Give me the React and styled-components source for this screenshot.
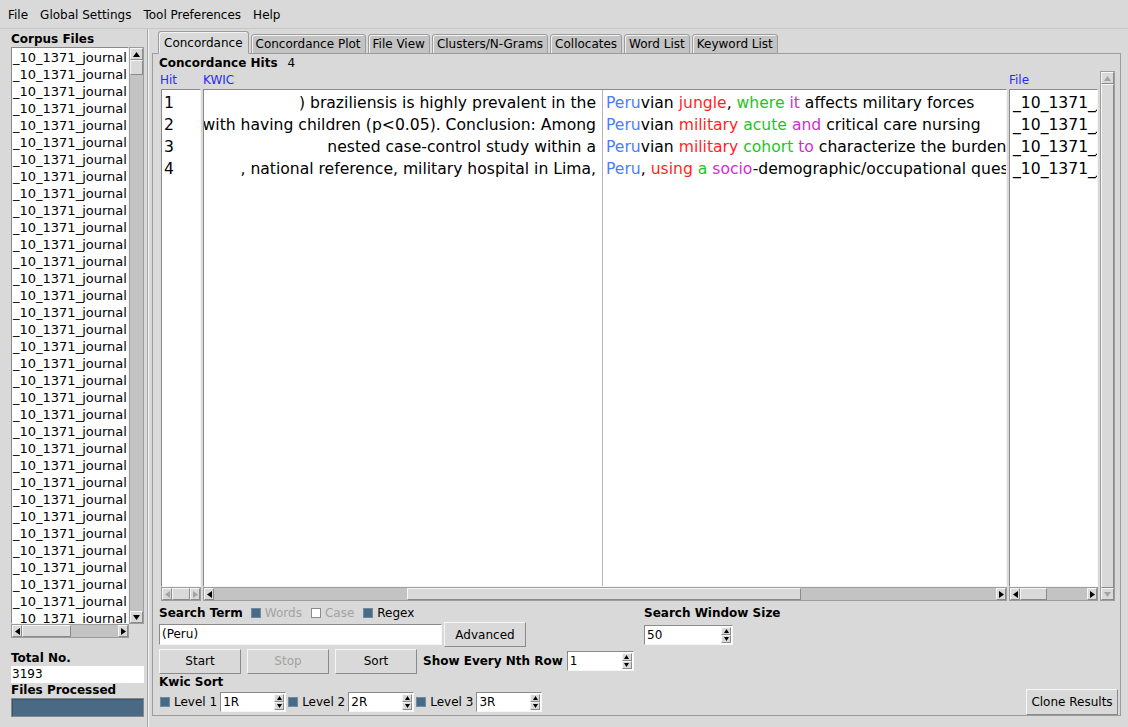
import React from "react";
import styled, { createGlobalStyle, css } from "styled-components";

const GlobalStyle = createGlobalStyle`
  html, body {
    margin: 0;
    padding: 0;
    background: #d9d9d9;
  }
  body {
    font-family: "DejaVu Sans", sans-serif;
    font-size: 12px;
    color: #000;
  }
  * { box-sizing: border-box; }
`;

// Tk-ish bevels
const raised = css`
  border: 1px solid;
  border-color: #f6f6f6 #8a8a8a #8a8a8a #f6f6f6;
`;
const sunken = css`
  border: 1px solid;
  border-color: #8a8a8a #f6f6f6 #f6f6f6 #8a8a8a;
`;

const Window = styled.div`
  width: 1128px;
  height: 727px;
  display: flex;
  flex-direction: column;
  overflow: hidden;
`;

const MenuBar = styled.div`
  height: 29px;
  flex: none;
  display: flex;
  align-items: center;
  padding: 1px 0 0 2px;
  border-bottom: 1px solid #c6c6c6;
`;

const MenuItem = styled.span`
  padding: 0 6px;
`;

const Main = styled.div`
  flex: 1;
  display: flex;
  min-height: 0;
`;

/* ---------- left side ---------- */

const LeftPanel = styled.div`
  width: 148px;
  flex: none;
  display: flex;
  flex-direction: column;
  padding: 2px 3px 0 11px;
  border-right: 1px solid #a9a9a9;
  box-shadow: 1px 0 0 #f2f2f2;
`;

const Heading = styled.div`
  font-weight: bold;
  height: ${({ $h }) => $h || 16}px;
  line-height: ${({ $h }) => $h || 16}px;
  margin-top: ${({ $mt }) => $mt || 0}px;
  white-space: nowrap;
`;

const ListBox = styled.div`
  height: 577px;
  display: flex;
`;

const ListBody = styled.div`
  flex: 1;
  background: #fff;
  ${sunken};
  overflow: hidden;
  padding: 1px 0 0 1px;
`;

const ListItem = styled.div`
  height: 17px;
  line-height: 17px;
  font-size: 13px;
  white-space: nowrap;
`;

const ValueBox = styled.div`
  height: 17px;
  line-height: 17px;
  background: #fff;
  padding-left: 1px;
`;

const Progress = styled.div`
  height: 19px;
  background: #4a6984;
  border: 1px solid #888;
  box-shadow: inset 1px 1px 0 #3a5570;
`;

/* ---------- scrollbars ---------- */

const Track = styled.div`
  display: flex;
  flex-direction: ${({ $vertical }) => ($vertical ? "column" : "row")};
  background: #c3c3c3;
  border: 1px solid #9c9c9c;
  width: ${({ $vertical, $w }) => ($vertical ? "15px" : $w ? `${$w}px` : "auto")};
  height: ${({ $vertical }) => ($vertical ? "auto" : "14px")};
  flex: none;
  grid-row: ${({ $row }) => $row || "auto"};
  grid-column: ${({ $col }) => $col || "auto"};
`;

const ArrowBtn = styled.div`
  flex: none;
  width: ${({ $vertical }) => ($vertical ? "auto" : "10px")};
  height: ${({ $vertical }) => ($vertical ? "12px" : "auto")};
  background: #d9d9d9;
  ${raised};
  display: flex;
  align-items: center;
  justify-content: center;
`;

const Lane = styled.div`
  flex: 1;
  display: flex;
  flex-direction: ${({ $vertical }) => ($vertical ? "column" : "row")};
`;

const Gap = styled.div`
  flex: ${({ $grow }) => $grow} 1 0;
`;

const Thumb = styled.div`
  flex: ${({ $grow }) => $grow} 1 0;
  background: #d9d9d9;
  ${raised};
`;

const Tri = ({ dir, off }) => {
  const pts = {
    up: "0,6 3.5,1 7,6",
    down: "0,1 3.5,6 7,1",
    left: "6,0 1,3.5 6,7",
    right: "1,0 6,3.5 1,7",
  }[dir];
  return (
    <svg width="7" height="7" viewBox="0 0 7 7">
      <polygon points={pts} fill={off ? "#a3a3a3" : "#000"} />
    </svg>
  );
};

const ScrollBar = ({ vertical, before = 0, size = 1, after = 0, off, w, row, col }) => (
  <Track $vertical={vertical} $w={w} $row={row} $col={col}>
    <ArrowBtn $vertical={vertical}>
      <Tri dir={vertical ? "up" : "left"} off={off} />
    </ArrowBtn>
    <Lane $vertical={vertical}>
      {before > 0 && <Gap $grow={before} />}
      <Thumb $grow={size} />
      {after > 0 && <Gap $grow={after} />}
    </Lane>
    <ArrowBtn $vertical={vertical}>
      <Tri dir={vertical ? "down" : "right"} off={off} />
    </ArrowBtn>
  </Track>
);

/* ---------- right side ---------- */

const RightPanel = styled.div`
  flex: 1;
  display: flex;
  flex-direction: column;
  padding: 3px 7px 11px 4px;
  min-width: 0;
`;

const TabBar = styled.div`
  height: 22px;
  flex: none;
  display: flex;
  align-items: flex-end;
  gap: 2px;
  padding-left: 6px;
  margin-bottom: -1px;
  position: relative;
  z-index: 1;
`;

const Tab = styled.div`
  height: ${({ $active }) => ($active ? "23px" : "20px")};
  padding: 0 ${({ $active }) => ($active ? 5 : 4)}px;
  display: flex;
  align-items: center;
  white-space: nowrap;
  background: ${({ $active }) => ($active ? "#d9d9d9" : "#c3c3c3")};
  border: 1px solid #9c9c9c;
  border-bottom-color: ${({ $active }) => ($active ? "#d9d9d9" : "#9c9c9c")};
  border-radius: 3px 3px 0 0;
  box-shadow: inset 1px 1px 0 #f2f2f2;
`;

const Frame = styled.div`
  flex: 1;
  display: flex;
  flex-direction: column;
  border: 1px solid #9c9c9c;
  padding: 1px 2px 0 6px;
  min-height: 0;
`;

const HitsLine = styled.div`
  height: 16px;
  line-height: 16px;
  flex: none;
  display: flex;
  gap: 10px;
`;

const Bold = styled.span`
  font-weight: bold;
  white-space: nowrap;
  margin-left: ${({ $ml }) => $ml || 0}px;
`;

const Results = styled.div`
  flex: 1;
  display: grid;
  grid-template-columns: 40px 804px 89px 16px;
  grid-template-rows: 18px 1fr 14px;
  column-gap: 2px;
  margin-left: 2px;
  min-height: 0;
`;

const ColHead = styled.div`
  color: #2a2aff;
  line-height: 18px;
  margin-left: ${({ $ml }) => $ml || 0}px;
`;

const TextBox = styled.div`
  background: #fff;
  ${sunken};
  overflow: hidden;
  padding-top: 2px;
  font-size: 15.6px;
  display: ${({ $split }) => ($split ? "flex" : "block")};
`;

const Row = styled.div`
  height: 22px;
  line-height: 22px;
  white-space: nowrap;
  overflow: hidden;
  padding-left: ${({ $pl }) => $pl || 0}px;
`;

const Pane = styled.div`
  width: ${({ $w }) => ($w ? `${$w}px` : "auto")};
  flex: ${({ $w }) => ($w ? "none" : "1")};
  min-width: 0;
  border-right: ${({ $divider }) => ($divider ? "1px solid #b4b4b4" : "none")};
  margin-top: -2px;
  padding-top: 2px;
`;

const CtxLeft = styled.div`
  height: 22px;
  line-height: 22px;
  display: flex;
  justify-content: flex-end;
  overflow: hidden;
  white-space: nowrap;
  padding-right: 6px;
`;

const CtxRight = styled(Row)`
  padding-left: 3px;
`;

const C = styled.span`
  color: ${({ $c }) =>
    ({ b: "#4d7cff", r: "#ff1f1f", g: "#1fc41f", m: "#d02ed0" }[$c] || "#000")};
`;

/* ---------- controls ---------- */

const Controls = styled.div`
  height: 114px;
  flex: none;
  display: flex;
  padding-top: 4px;
`;

const ControlCol = styled.div`
  width: ${({ $w }) => ($w ? `${$w}px` : "auto")};
  flex: none;
  display: flex;
  flex-direction: column;
  margin-left: ${({ $ml }) => $ml || 0}px;
`;

const CtlRow = styled.div`
  display: flex;
  align-items: center;
  height: ${({ $h }) => $h}px;
  white-space: nowrap;
`;

const Check = styled.span`
  width: 10px;
  height: 10px;
  flex: none;
  background: ${({ $on }) => ($on ? "#4a6984" : "#fff")};
  border: 1px solid ${({ $on }) => ($on ? "#6f8aa3" : "#8a8a8a")};
  margin-left: ${({ $ml }) => $ml || 0}px;
`;

const CheckText = styled.span`
  color: ${({ $off }) => ($off ? "#a3a3a3" : "#000")};
  margin-left: 4px;
`;

const Entry = styled.div`
  width: ${({ $w }) => $w}px;
  height: 21px;
  line-height: 19px;
  background: #fff;
  ${sunken};
  padding-left: 2px;
`;

const Button = styled.div`
  width: ${({ $w }) => $w}px;
  height: 25px;
  flex: none;
  display: flex;
  align-items: center;
  justify-content: center;
  background: #d9d9d9;
  ${raised};
  color: ${({ $off }) => ($off ? "#a3a3a3" : "#000")};
  margin-left: ${({ $ml }) => $ml || 0}px;
`;

const SpinBox = styled.div`
  width: ${({ $w }) => $w}px;
  height: 20px;
  flex: none;
  display: flex;
  background: #fff;
  ${sunken};
  margin-left: ${({ $ml }) => $ml || 0}px;
`;

const SpinText = styled.span`
  flex: 1;
  line-height: 18px;
  padding-left: 2px;
`;

const SpinArrows = styled.div`
  width: 10px;
  display: flex;
  flex-direction: column;
  margin: 1px 1px 1px 0;
`;

const SpinBtn = styled.div`
  flex: 1;
  background: #d9d9d9;
  ${raised};
  display: flex;
  align-items: center;
  justify-content: center;
`;

const Spacer = styled.div`
  flex: 1;
`;

const CloneButton = styled(Button)`
  width: 92px;
  height: 26px;
  align-self: flex-end;
`;

const SmallTri = ({ dir }) => (
  <svg width="5" height="4" viewBox="0 0 5 4">
    <polygon points={dir === "up" ? "0,4 2.5,0 5,4" : "0,0 2.5,4 5,0"} fill="#000" />
  </svg>
);

const Spinner = ({ value, w, ml }) => (
  <SpinBox $w={w} $ml={ml}>
    <SpinText>{value}</SpinText>
    <SpinArrows>
      <SpinBtn>
        <SmallTri dir="up" />
      </SpinBtn>
      <SpinBtn>
        <SmallTri dir="down" />
      </SpinBtn>
    </SpinArrows>
  </SpinBox>
);

const tabs = [
  "Concordance",
  "Concordance Plot",
  "File View",
  "Clusters/N-Grams",
  "Collocates",
  "Word List",
  "Keyword List",
];

const leftCtx = [
  ") braziliensis is highly prevalent in the",
  "associated with having children (p<0.05). Conclusion: Among",
  "nested case-control study within a",
  ", national reference, military hospital in Lima,",
];

const rightCtx = [
  [["b", "Peru"], ["", "vian "], ["r", "jungle"], ["", ", "], ["g", "where"], ["", " "], ["m", "it"], ["", " affects military forces"]],
  [["b", "Peru"], ["", "vian "], ["r", "military"], ["", " "], ["g", "acute"], ["", " "], ["m", "and"], ["", " critical care nursing"]],
  [["b", "Peru"], ["", "vian "], ["r", "military"], ["", " "], ["g", "cohort"], ["", " "], ["m", "to"], ["", " characterize the burden of disease"]],
  [["b", "Peru"], ["", ", "], ["r", "using"], ["", " "], ["g", "a"], ["", " "], ["m", "socio"], ["", "-demographic/occupational questionnaire"]],
];

const corpusFiles = Array.from({ length: 35 }, () => "_10_1371_journal");

export default function App() {
  return (
    <Window>
      <GlobalStyle />
      <MenuBar>
        <MenuItem>File</MenuItem>
        <MenuItem>Global Settings</MenuItem>
        <MenuItem>Tool Preferences</MenuItem>
        <MenuItem>Help</MenuItem>
      </MenuBar>

      <Main>
        <LeftPanel>
          <Heading>Corpus Files</Heading>
          <ListBox>
            <ListBody>
              {corpusFiles.map((f, i) => (
                <ListItem key={i}>{f}</ListItem>
              ))}
            </ListBody>
            <ScrollBar vertical before={0} size={13} after={538} />
          </ListBox>
          <ScrollBar w={118} before={0} size={1} after={1} />
          <Heading $mt={12}>Total No.</Heading>
          <ValueBox>3193</ValueBox>
          <Heading $h={15}>Files Processed</Heading>
          <Progress />
        </LeftPanel>

        <RightPanel>
          <TabBar>
            {tabs.map((t, i) => (
              <Tab key={t} $active={i === 0}>
                {t}
              </Tab>
            ))}
          </TabBar>
          <Frame>
            <HitsLine>
              <Bold>Concordance Hits</Bold>
              <span>4</span>
            </HitsLine>

            <Results>
              <ColHead $ml={-1}>Hit</ColHead>
              <ColHead>KWIC</ColHead>
              <ColHead>File</ColHead>
              <ScrollBar vertical off row="1 / span 3" col="4" />

              <TextBox>
                {[1, 2, 3, 4].map((n) => (
                  <Row key={n} $pl={2}>
                    {n}
                  </Row>
                ))}
              </TextBox>
              <TextBox $split>
                <Pane $w={399} $divider>
                  {leftCtx.map((t, i) => (
                    <CtxLeft key={i}>
                      <span>{t}</span>
                    </CtxLeft>
                  ))}
                </Pane>
                <Pane>
                  {rightCtx.map((parts, i) => (
                    <CtxRight key={i}>
                      {parts.map(([c, s], j) => (
                        <C key={j} $c={c}>
                          {s}
                        </C>
                      ))}
                    </CtxRight>
                  ))}
                </Pane>
              </TextBox>
              <TextBox>
                {[1, 2, 3, 4].map((n) => (
                  <Row key={n} $pl={3}>
                    _10_1371_journal.pone
                  </Row>
                ))}
              </TextBox>

              <ScrollBar off />
              <ScrollBar before={193} size={393} after={195} />
              <ScrollBar before={0} size={26} after={41} />
            </Results>

            <Controls>
              <ControlCol $w={484}>
                <CtlRow $h={16}>
                  <Bold>Search Term</Bold>
                  <Check $on $ml={8} />
                  <CheckText $off>Words</CheckText>
                  <Check $ml={9} />
                  <CheckText $off>Case</CheckText>
                  <Check $on $ml={9} />
                  <CheckText>Regex</CheckText>
                </CtlRow>
                <CtlRow $h={27}>
                  <Entry $w={283}>(Peru)</Entry>
                  <Button $w={82} $ml={2}>
                    Advanced
                  </Button>
                </CtlRow>
                <CtlRow $h={26}>
                  <Button $w={82}>Start</Button>
                  <Button $w={82} $ml={6} $off>
                    Stop
                  </Button>
                  <Button $w={82} $ml={6}>
                    Sort
                  </Button>
                  <Bold $ml={6}>Show Every Nth Row</Bold>
                  <Spinner value="1" w={67} ml={4} />
                </CtlRow>
                <CtlRow $h={16}>
                  <Bold>Kwic Sort</Bold>
                </CtlRow>
                <CtlRow $h={24}>
                  <Check $on $ml={1} />
                  <CheckText>Level 1</CheckText>
                  <Spinner value="1R" w={66} ml={3} />
                  <Check $on $ml={2} />
                  <CheckText>Level 2</CheckText>
                  <Spinner value="2R" w={66} ml={3} />
                  <Check $on $ml={2} />
                  <CheckText>Level 3</CheckText>
                  <Spinner value="3R" w={66} ml={3} />
                </CtlRow>
              </ControlCol>

              <ControlCol $ml={1}>
                <CtlRow $h={16}>
                  <Bold>Search Window Size</Bold>
                </CtlRow>
                <CtlRow $h={27}>
                  <Spinner value="50" w={89} />
                </CtlRow>
              </ControlCol>

              <Spacer />
              <CloneButton>Clone Results</CloneButton>
            </Controls>
          </Frame>
        </RightPanel>
      </Main>
    </Window>
  );
}
